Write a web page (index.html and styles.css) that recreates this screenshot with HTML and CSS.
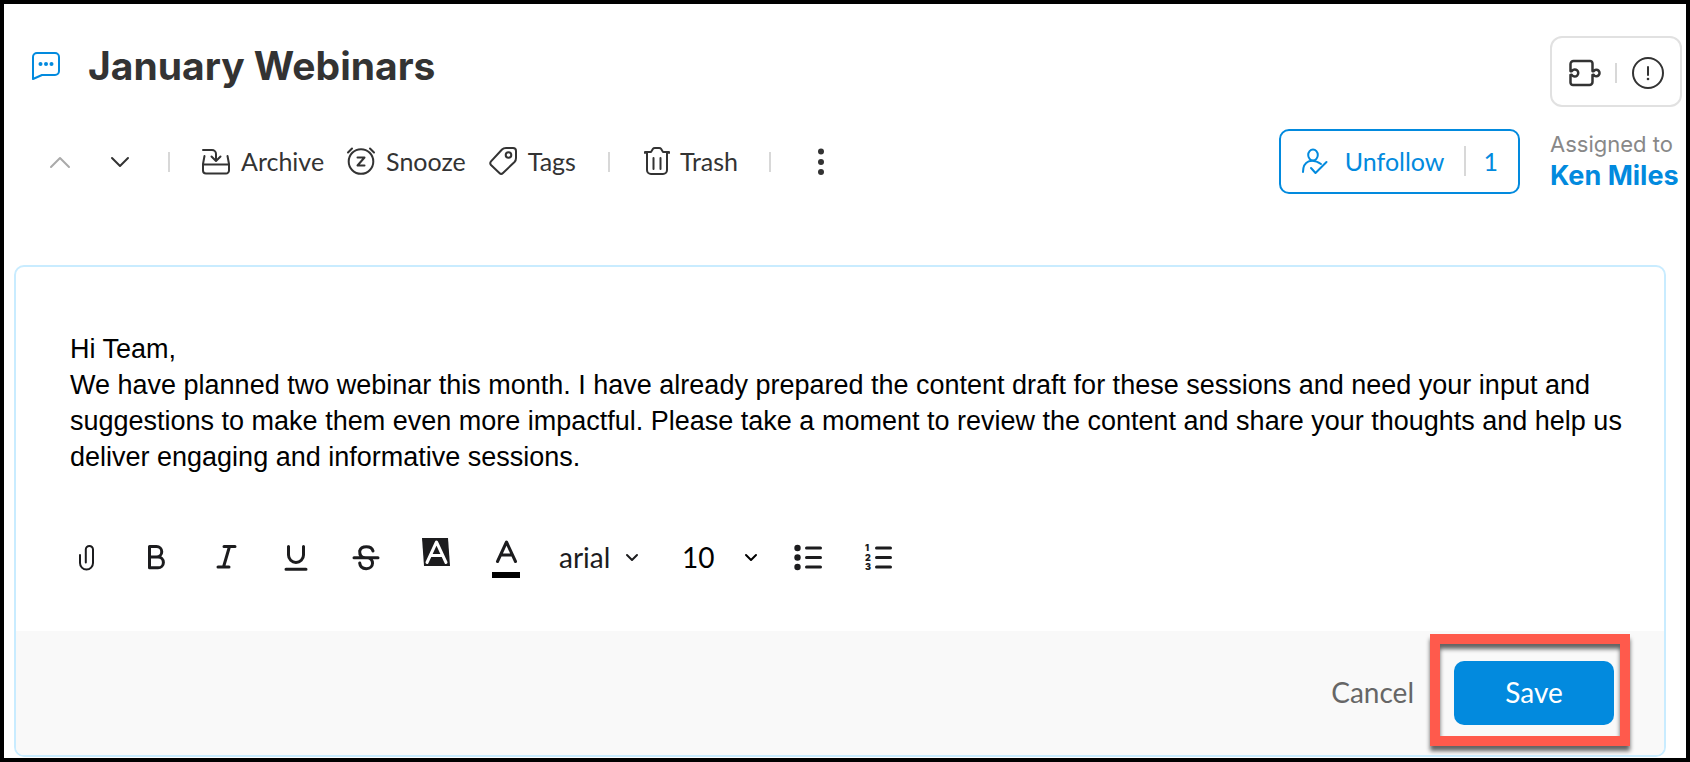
FILE: index.html
```html
<!DOCTYPE html>
<html lang="en">
<head>
<meta charset="utf-8">
<meta name="viewport" content="width=device-width, initial-scale=1">
<title>January Webinars</title>
<link rel="stylesheet" href="styles.css">
</head>
<body>
<main class="page">
  <header class="heading">
    <svg class="chat-icon" width="30" height="30" viewBox="0 0 30 30" aria-hidden="true"><path d="M2 28V6a4 4 0 0 1 4-4h18a4 4 0 0 1 4 4v14a4 4 0 0 1-4 4H11z"/><g class="solid"><circle cx="9.5" cy="13" r="2"/><circle cx="15" cy="13" r="2"/><circle cx="20.500" cy="13" r="2"/></g></svg>
    <h1 class="title">January Webinars</h1>
    <div class="tools-box">
      <button class="icon-button" type="button" aria-label="Extensions"><svg width="32" height="28" viewBox="0 0 32 28"><path class="heavy" d="M1.500 12V5a3 3 0 0 1 3-3H21a2.500 2.500 0 0 1 2.500 2.500V12q.8.8 1.600-.3a3.200 3.200 0 1 1 0 4.600q-.8-1.100-1.600-.3V23a3 3 0 0 1-3 3H4a2.500 2.500 0 0 1-2.500-2.500V16q.8-.8 1.600.3a3.500 3.500 0 1 0 0-4.600q-.8 1.100-1.600.3z"/></svg></button>
      <span class="divider"></span>
      <button class="icon-button" type="button" aria-label="Information"><svg width="34" height="34" viewBox="0 0 34 34"><circle cx="17" cy="17" r="15"/><path d="M17 11v8"/><circle class="solid" cx="17" cy="23" r="1.300"/></svg></button>
    </div>
  </header>

  <div class="actions">
    <nav class="toolbar" aria-label="Post actions">
      <button class="icon-button step" type="button" aria-label="Previous" disabled><svg width="22" height="14" viewBox="0 0 22 14"><path d="M2 12l9-9 9 9"/></svg></button>
      <button class="icon-button step" type="button" aria-label="Next"><svg width="22" height="14" viewBox="0 0 22 14"><path d="M3 3l8 8 8-8"/></svg></button>
      <span class="divider"></span>
      <button class="action first" type="button"><svg width="30" height="30" viewBox="0 0 30 30"><path d="M2 4h9a4 4 0 0 1 4 4v6.500M10.500 10.500L15 15l4.500-4.500M3.500 10L2 18v6.500a3 3 0 0 0 3 3h20a3 3 0 0 0 3-3V18l-1.500-8M2 18.500h26"/></svg>Archive</button>
      <button class="action snooze" type="button"><svg width="30" height="30" viewBox="0 0 30 30"><circle cx="15" cy="15.500" r="12.300"/><path d="M2 6.500l4-4M28 6.500l-4-4M11.500 11.500h7l-7 8h7"/></svg>Snooze</button>
      <button class="action tags" type="button"><svg width="30" height="30" viewBox="0 0 30 30"><path d="M14 3.500Q15.500 2 18 2h7q3 0 3 3v7q0 2.500-1.500 4L15 27q-1.800 1.700-3.600 0L3 19q-1.500-1.800 0-3.600z"/><circle cx="20.500" cy="9" r="2.800"/></svg>Tags</button>
      <span class="divider"></span>
      <button class="action trash" type="button"><svg width="26" height="30" viewBox="0 0 26 30"><path d="M1 7V6h6l2-3.200Q9.500 2 11 2h4q1.500 0 2 .8L19 6h6v1M3 6v18a4 4 0 0 0 4 4h12a4 4 0 0 0 4-4V6M9.500 12v11M16.500 12v11"/></svg>Trash</button>
      <span class="divider"></span>
      <button class="icon-button more" type="button" aria-label="More"><svg width="8" height="30" viewBox="0 0 8 30"><g class="solid"><circle cx="4" cy="4.500" r="3"/><circle cx="4" cy="15" r="3"/><circle cx="4" cy="25" r="3"/></g></svg></button>
    </nav>
    <div class="people">
      <button class="follow" type="button">
        <svg width="28" height="28" viewBox="0 0 28 28" aria-hidden="true"><ellipse cx="13" cy="8" rx="4.800" ry="5.500"/><path d="M3 25c0-11 9-14.500 18-8M11 21l4.500 5L26.500 15"/></svg>
        <span class="follow-label">Unfollow</span>
        <span class="follow-count">1</span>
      </button>
      <div class="assignee"><span class="assignee-label">Assigned to</span><a class="assignee-name" href="#">Ken Miles</a></div>
    </div>
  </div>

  <form class="editor">
    <textarea class="message" rows="4" aria-label="Message" spellcheck="false">Hi Team,
We have planned two webinar this month. I have already prepared the content draft for these sessions and need your input and suggestions to make them even more impactful. Please take a moment to review the content and share your thoughts and help us deliver engaging and informative sessions.</textarea>
    <div class="format" role="toolbar" aria-label="Formatting">
      <button class="format-button" type="button" aria-label="Attach file"><svg width="30" height="30" viewBox="0 0 30 30"><path class="thin" d="M9 13v8a6.500 6.500 0 0 0 13 0V7.500a3.600 3.600 0 0 0-7.200 0v13"/></svg></button>
      <button class="format-button" type="button" aria-label="Bold"><svg width="30" height="30" viewBox="0 0 30 30"><path class="bold" d="M8.500 4.500h7a5 5 0 0 1 0 10.500h-7zM8.500 15h8.500a5 5 0 0 1 0 10.800h-8.500z"/></svg></button>
      <button class="format-button" type="button" aria-label="Italic"><svg width="30" height="30" viewBox="0 0 30 30"><path class="bold" d="M13 4.500h11M7 25h11M18.500 4.500L12.500 25"/></svg></button>
      <button class="format-button" type="button" aria-label="Underline"><svg width="30" height="30" viewBox="0 0 30 30"><path class="bold" d="M7.500 4.500V13a7.500 7.500 0 0 0 15 0V4.500M5 27.300h20"/></svg></button>
      <button class="format-button" type="button" aria-label="Strikethrough"><svg width="30" height="30" viewBox="0 0 30 30"><path class="bold" d="M3 15.700h24M22 9a6.800 5.500 0 0 0-13.300 0q-.4 6.700 6 6.700h1.500c7 0 7.500 11-1 11q-6-.2-6.500-5.700"/></svg></button>
      <button class="format-button fill" type="button" aria-label="Highlight colour"><svg width="30" height="30" viewBox="0 0 30 30"><path class="solid" d="M1 1h26l2 28H3z"/><path class="knockout" d="M6 25.500L15.500 5 25 25.500M9.500 18.500h12"/></svg></button>
      <button class="format-button ink" type="button" aria-label="Text colour"><svg width="30" height="40" viewBox="0 0 30 40"><path class="bold" d="M6.500 22.500L15.500 3 24.500 22.500M9.800 16h11.400"/><path class="ink-bar" d="M1 33h28v6H1z"/></svg></button>
      <label class="picker face"><select aria-label="Font"><option>arial</option></select><svg width="14" height="12" viewBox="0 0 14 12"><path d="M2 4l5 5 5-5"/></svg></label>
      <label class="picker size"><select aria-label="Font size"><option>10</option></select><svg width="14" height="12" viewBox="0 0 14 12"><path d="M2 4l5 5 5-5"/></svg></label>
      <button class="format-button" type="button" aria-label="Bulleted list"><svg width="30" height="30" viewBox="0 0 30 30"><g class="solid"><circle cx="4.500" cy="6" r="3.200"/><circle cx="4.500" cy="15.500" r="3.200"/><circle cx="4.500" cy="25" r="3.200"/></g><path class="bold" d="M13.500 6h14M13.500 15.500h14M13.500 25h14"/></svg></button>
      <button class="format-button" type="button" aria-label="Numbered list"><svg width="30" height="30" viewBox="0 0 30 30"><g class="digits"><text x="2" y="9">1</text><text x="2" y="19">2</text><text x="2" y="28">3</text></g><path class="bold" d="M13.500 6h14M13.500 15.500h14M13.500 25h14"/></svg></button>
    </div>
    <footer class="footer">
      <button class="cancel" type="button">Cancel</button>
      <div class="save-wrap"><button class="save" type="submit">Save</button><span class="callout"></span></div>
    </footer>
  </form>
</main>
</body>
</html>
```
FILE: styles.css
```css
* { box-sizing: border-box; }

body {
  margin: 0;
  background: #fff;
  color: #333;
  font-family: Lato, "Open Sans", sans-serif;
  font-size: 25px;
}

button, select, textarea {
  margin: 0;
  padding: 0;
  border: 0;
  background: none;
  color: inherit;
  font: inherit;
}

svg {
  flex: none;
  display: block;
  fill: none;
  stroke: currentColor;
  stroke-width: 2;
  stroke-linecap: round;
  stroke-linejoin: round;
}

.solid { fill: currentColor; stroke: none; }
.ink-bar { fill: #000; stroke: none; }
.thin { stroke-width: 2; }
.heavy { stroke-width: 2.5; }
.bold { stroke-width: 3; }
.knockout { stroke: #fff; stroke-width: 3; }
.digits { fill: currentColor; stroke: none; font: 900 9px Inter, sans-serif; }

.page {
  min-height: 100vh;
  padding: 32px 0 1px;
  border: 4px solid #000;
}

.heading {
  display: flex;
  align-items: flex-start;
  padding: 0 4px 0 27px;
}

.chat-icon { margin-top: 15px; color: #028ade; }

.title {
  flex: 1;
  margin: 0 0 0 27px;
  font: 700 39px/60px Inter, sans-serif;
}

.tools-box {
  display: flex;
  align-items: center;
  gap: 14px;
  height: 71px;
  padding: 2px 15px 0 17px;
  border: 2px solid #e1e1e1;
  border-radius: 12px;
}

.icon-button { display: grid; place-items: center; }
.icon-button:disabled { color: #aaa; }
.divider { flex: none; width: 2px; height: 20px; background: #d8d8d8; }

.actions {
  display: flex;
  justify-content: space-between;
  margin-top: 22px;
  padding: 0 4px 0 26px;
}

.toolbar { display: flex; align-items: center; height: 65px; }
.step { width: 60px; }
.step + .divider { margin-left: 18px; }

.action {
  display: flex;
  align-items: center;
  gap: 10px;
  padding-bottom: 2px;
  white-space: nowrap;
}

.first { margin-left: 31px; }
.snooze { margin-left: 22px; }
.tags { margin: 0 32px 0 22px; }
.trash { margin: 0 31px 0 34px; }
.more { margin-left: 46px; }

.people { display: flex; gap: 30px; }

.follow {
  display: flex;
  align-items: center;
  height: 65px;
  padding: 0 20px 2px 19px;
  border: 2px solid #028ade;
  border-radius: 10px;
  color: #028ade;
}

.follow-label { margin: 0 20px 0 17px; }
.follow-count { padding-left: 17px; border-left: 2px solid #d8d8d8; }

.assignee {
  display: flex;
  flex-direction: column;
  width: 132px;
  white-space: nowrap;
  font-family: Inter, sans-serif;
  font-size: 22px;
  line-height: 31px;
}

.assignee-label { color: #888; }
.assignee-name { color: #028ade; font-size: 27px; font-weight: 700; text-decoration: none; }

.editor {
  margin: 71px 20px 0 10px;
  padding-top: 64px;
  border: 2px solid #c9ecff;
  border-radius: 10px;
}

.message {
  display: block;
  width: 100%;
  padding: 0 40px 0 54px;
  overflow: hidden;
  resize: none;
  color: #000;
  font: 27px/36px "Liberation Sans", Arial, sans-serif;
}

.format {
  display: flex;
  align-items: center;
  height: 72px;
  margin: 46px 0 38px;
  padding-left: 35px;
  color: #1c1c1e;
}

.format-button { display: grid; place-items: center; width: 70px; height: 40px; }
.fill { align-items: start; }
.ink { align-items: end; height: 44px; }

.picker { display: grid; align-items: center; font-size: 28px; }
.picker select, .picker svg { grid-area: 1 / 1; }
.picker select { width: 100%; appearance: none; }
.picker svg { justify-self: end; pointer-events: none; }
.face { width: 80px; margin: 0 43px 0 18px; }
.size { width: 76px; margin-right: 15px; color: #000; }

.footer {
  display: flex;
  align-items: center;
  justify-content: flex-end;
  gap: 40px;
  height: 124px;
  padding-right: 50px;
  border-radius: 0 0 8px 8px;
  background: #f9f9f9;
  font-size: 28px;
}

.cancel { padding-bottom: 2px; color: #666; }
.save-wrap { position: relative; }

.save {
  width: 160px;
  height: 64px;
  padding-bottom: 2px;
  border-radius: 10px;
  background: #028ade;
  color: #fff;
}

.callout {
  position: absolute;
  inset: -27px -16px -21px -24px;
  border: 10px solid #ff5a4c;
  filter: drop-shadow(0 5px 2px rgba(0, 0, 0, .6));
  pointer-events: none;
}
```
